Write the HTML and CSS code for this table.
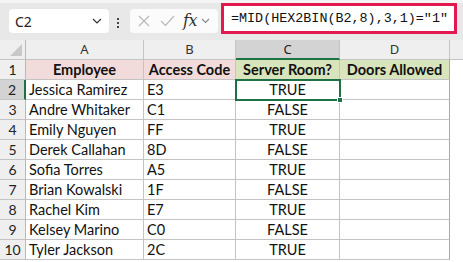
FILE: index.html
```html
<!DOCTYPE html>
<html>
<head>
<meta charset="utf-8">
<link rel="stylesheet" href="styles.css">
</head>
<body>
<div class="app">
  <div class="toolbar">
    <div class="namebox">
      <span class="nb-text">C2</span>
      <svg class="chev" width="10" height="6" viewBox="0 0 10 6"><path d="M1 1 L5 5 L9 1" fill="none" stroke="#333" stroke-width="1.2"/></svg>
    </div>
    <div class="dots"><span></span><span></span><span></span></div>
    <div class="fxbox">
      <svg class="ic" width="12" height="12" viewBox="0 0 12 12"><path d="M1 1 L11 11 M11 1 L1 11" stroke="#b9b9b9" stroke-width="1.2" fill="none"/></svg>
      <svg class="ic chk" width="15" height="12" viewBox="0 0 15 12"><path d="M1 6 L5.5 10.5 L14 1" stroke="#b9b9b9" stroke-width="1.2" fill="none"/></svg>
      <span class="fx">fx</span>
      <svg class="chev2" width="9" height="6" viewBox="0 0 9 6"><path d="M1 1 L4.5 4.5 L8 1" fill="none" stroke="#888" stroke-width="1.1"/></svg>
    </div>
    <div class="formula">=MID(HEX2BIN(B2,8),3,1)="1"</div>
  </div>
  <div class="sheet">
    <div class="row hdr">
      <div class="c rh corner"><span class="tri"></span></div>
      <div class="c ca ch">A</div>
      <div class="c cb ch">B</div>
      <div class="c cc ch sel">C</div>
      <div class="c cd ch">D</div>
      <div class="c ce ch"></div>
    </div>
    <div class="row">
      <div class="c rh">1</div>
      <div class="c ca th pink">Employee</div>
      <div class="c cb th pink">Access Code</div>
      <div class="c cc th green">Server Room?</div>
      <div class="c cd th green">Doors Allowed</div>
    </div>
    <div class="row">
      <div class="c rh rsel">2</div>
      <div class="c ca">Jessica Ramirez</div>
      <div class="c cb">E3</div>
      <div class="c cc mid active">TRUE<span class="handle"></span></div>
      <div class="c cd"></div>
    </div>
    <div class="row">
      <div class="c rh">3</div>
      <div class="c ca">Andre Whitaker</div>
      <div class="c cb">C1</div>
      <div class="c cc mid">FALSE</div>
      <div class="c cd"></div>
    </div>
    <div class="row">
      <div class="c rh">4</div>
      <div class="c ca">Emily Nguyen</div>
      <div class="c cb">FF</div>
      <div class="c cc mid">TRUE</div>
      <div class="c cd"></div>
    </div>
    <div class="row">
      <div class="c rh">5</div>
      <div class="c ca">Derek Callahan</div>
      <div class="c cb">8D</div>
      <div class="c cc mid">FALSE</div>
      <div class="c cd"></div>
    </div>
    <div class="row">
      <div class="c rh">6</div>
      <div class="c ca">Sofia Torres</div>
      <div class="c cb">A5</div>
      <div class="c cc mid">TRUE</div>
      <div class="c cd"></div>
    </div>
    <div class="row">
      <div class="c rh">7</div>
      <div class="c ca">Brian Kowalski</div>
      <div class="c cb">1F</div>
      <div class="c cc mid">FALSE</div>
      <div class="c cd"></div>
    </div>
    <div class="row">
      <div class="c rh">8</div>
      <div class="c ca">Rachel Kim</div>
      <div class="c cb">E7</div>
      <div class="c cc mid">TRUE</div>
      <div class="c cd"></div>
    </div>
    <div class="row">
      <div class="c rh">9</div>
      <div class="c ca">Kelsey Marino</div>
      <div class="c cb">C0</div>
      <div class="c cc mid">FALSE</div>
      <div class="c cd"></div>
    </div>
    <div class="row">
      <div class="c rh">10</div>
      <div class="c ca">Tyler Jackson</div>
      <div class="c cb">2C</div>
      <div class="c cc mid">TRUE</div>
      <div class="c cd"></div>
    </div>
  </div>
</div>
</body>
</html>
```
FILE: styles.css
```css
* { box-sizing: border-box; }
html, body { margin: 0; padding: 0; background: #fff; }
.app { width: 463px; height: 262px; overflow: hidden; }
.toolbar {
  height: 40px;
  background: #e8e8e8;
  border-top: 3px solid #f4f4f4;
  display: flex;
  align-items: flex-start;
  position: relative;
}
.namebox {
  margin: 6px 0 0 9px;
  width: 100px; height: 24px;
  background: #fff;
  border-radius: 4px;
  display: flex; align-items: center; justify-content: space-between;
  padding: 0 7px 0 6px;
  font-family: "Noto Sans", sans-serif; font-size: 14px; color: #222;
}
.dots {
  margin: 15px 0 0 8px;
  width: 3px;
  display: flex; flex-direction: column; gap: 2px;
}
.dots span { width: 2px; height: 2px; background: #444; display: block; }
.fxbox {
  margin: 6px 0 0 10px;
  width: 88px; height: 24px;
  background: #fbfbfb;
  border-radius: 4px;
  display: flex; align-items: center;
  padding-left: 8px;
}
.ic { display: block; }
.chk { margin-left: 10px; }
.fx {
  font-family: "DejaVu Serif", serif; font-style: italic;
  font-size: 16px; color: #333; margin-left: 8px; line-height: 1;
  letter-spacing: -0.5px;
}
.chev2 { margin-left: 4px; }
.formula {
  margin: 0 0 0 3px;
  width: 236px; height: 31px;
  border: 3px solid #e2194f;
  background: #fff;
  font-family: "Liberation Mono", monospace;
  font-size: 13.4px;
  color: #111;
  padding-left: 7px;
  line-height: 25px;
  white-space: nowrap;
}
.sheet { font-family: "Lato", "Carlito", sans-serif; font-size: 14.5px; color: #111; }
.row { display: flex; height: 20px; }
.c {
  height: 20px;
  border-right: 1px solid #c4c4c4;
  border-bottom: 1px solid #c4c4c4;
  line-height: 19px;
  white-space: nowrap;
  overflow: visible;
  position: relative;
}
.rh { width: 26px; background: #efefef; text-align: center; font-size: 14px; color: #222; border-right-color: #b8b8b8; }
.ca { width: 118px; padding-left: 3px; }
.cb { width: 92px; padding-left: 3px; }
.cc { width: 104px; }
.cd { width: 110px; border-right-color: #a8a8a8; }
.ce { flex: 1; }
.hdr .c { background: #efefef; text-align: center; font-family: "Noto Sans", sans-serif; font-size: 13px; color: #333; line-height: 19px; padding: 0; }
.hdr .cd { border-right-color: #c4c4c4; }
.hdr .ce { border-right: none; }
.hdr .sel { background: #d3d3d3; border-bottom: 2px solid #1e7145; color: #222; }
.corner { position: relative; }
.tri {
  position: absolute; right: 3px; bottom: 3px;
  width: 0; height: 0;
  border-left: 12px solid transparent;
  border-bottom: 12px solid #c8c8c8;
}
.rsel { background: #d3d3d3; border-right: 2px solid #1e7145; }
.th { font-weight: bold; text-align: center; padding: 0; }
.pink { background: #f2dcdb; }
.green { background: #d8e4bc; }
.mid { text-align: center; }
.active { outline: 2px solid #1e7145; outline-offset: -1px; z-index: 2; }
.handle {
  position: absolute; right: -4px; bottom: -4px;
  width: 6px; height: 6px; background: #1e7145;
  border: 1px solid #fff;
}
```
